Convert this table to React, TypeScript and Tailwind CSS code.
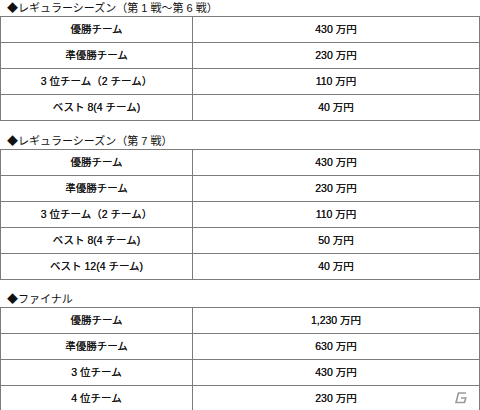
import React from "react";

type Row = [string, string];

const sections: { title: string; rows: Row[] }[] = [
  {
    title: "◆レギュラーシーズン（第 1 戦～第 6 戦）",
    rows: [
      ["優勝チーム", "430 万円"],
      ["準優勝チーム", "230 万円"],
      ["3 位チーム（2 チーム）", "110 万円"],
      ["ベスト 8(4 チーム)", "40 万円"],
    ],
  },
  {
    title: "◆レギュラーシーズン（第 7 戦）",
    rows: [
      ["優勝チーム", "430 万円"],
      ["準優勝チーム", "230 万円"],
      ["3 位チーム（2 チーム）", "110 万円"],
      ["ベスト 8(4 チーム)", "50 万円"],
      ["ベスト 12(4 チーム)", "40 万円"],
    ],
  },
  {
    title: "◆ファイナル",
    rows: [
      ["優勝チーム", "1,230 万円"],
      ["準優勝チーム", "630 万円"],
      ["3 位チーム", "430 万円"],
      ["4 位チーム", "230 万円"],
    ],
  },
];

export default function App() {
  return (
    <div
      className="relative w-[480px] h-[410px] overflow-hidden bg-white text-[#111111] text-[10.5px]"
      style={{ fontFamily: '"Liberation Sans", "Noto Sans CJK JP", sans-serif' }}
    >
      {sections.map((s, i) => (
        <div key={i} className={i === 0 ? "" : i === 1 ? "mt-[12px]" : "mt-[11px]"}>
          <div className="h-[16px] pl-[7px] flex items-center text-[11px] leading-none">
            {s.title}
          </div>
          <div className="border-t border-l border-r border-[#7c7c7c] [text-shadow:0_0_0.25px_#333]">
            {s.rows.map((r, j) => (
              <div key={j} className="flex h-[26px] border-b border-[#7c7c7c]">
                <div className="w-[192px] border-r border-[#7c7c7c] flex items-center justify-center leading-none">
                  {r[0]}
                </div>
                <div className="flex-1 flex items-center justify-center leading-none">
                  {r[1]}
                </div>
              </div>
            ))}
          </div>
        </div>
      ))}
      <svg
        className="absolute left-[454px] top-[392px]"
        width="14"
        height="12"
        viewBox="0 0 14 12"
      >
        <path
          d="M12 1 H4.5 L2 10.5 H10.5 L11.8 6 H7"
          fill="none"
          stroke="#9a9a9a"
          strokeWidth="1.6"
        />
      </svg>
    </div>
  );
}
